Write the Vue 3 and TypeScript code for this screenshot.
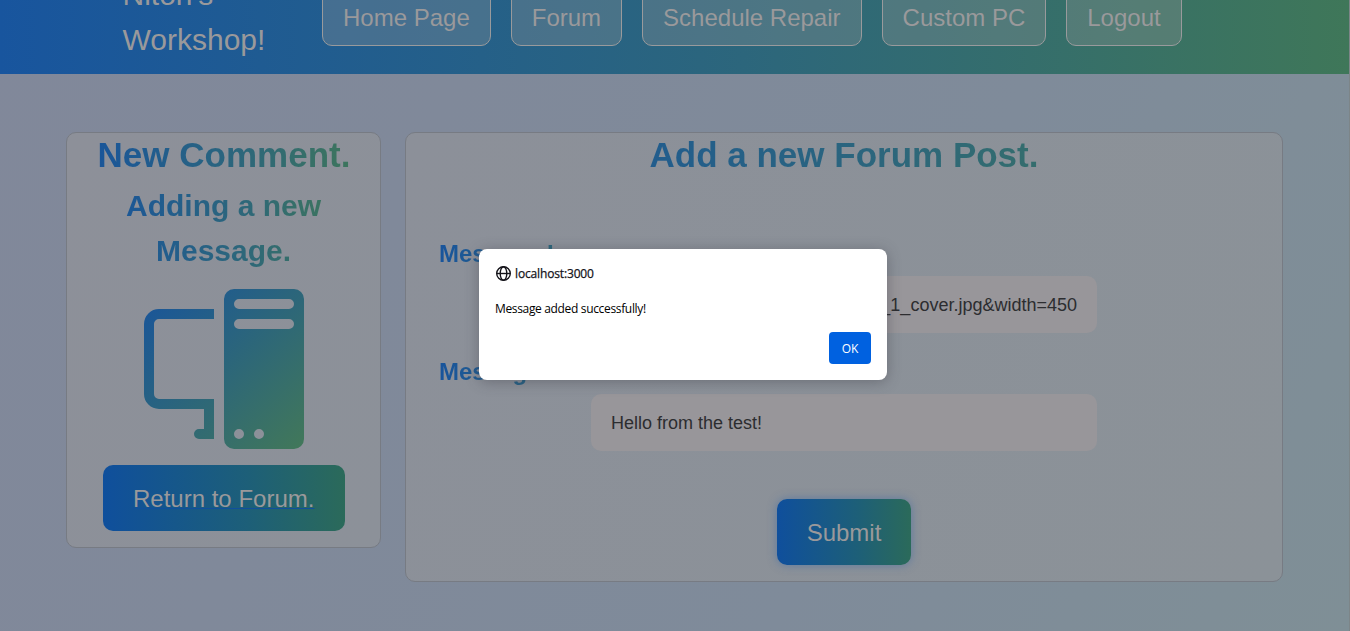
<script setup lang="ts">
const links: string[] = ['Home Page', 'Forum', 'Schedule Repair', 'Custom PC', 'Logout']
const fields: { label: string; value: string; end: boolean }[] = [
  { label: 'Message Image:', value: '_1_cover.jpg&width=450', end: true },
  { label: 'Message:', value: 'Hello from the test!', end: false },
]
</script>

<template>
  <div class="page">
    <header class="bar">
      <div class="brand">Niton's<br />Workshop!</div>
      <nav class="links">
        <a v-for="l in links" :key="l" class="link">{{ l }}</a>
      </nav>
    </header>
    <main class="main">
      <section class="card side">
        <h1 class="title grad">New Comment.</h1>
        <h2 class="sub grad">Adding a new Message.</h2>
        <svg class="pc" viewBox="0 0 16 16">
          <defs>
            <linearGradient id="pcfill" x1="0" y1="0" x2="1" y2="1">
              <stop offset="0" stop-color="#18549c" />
              <stop offset="0.5" stop-color="#2c667a" />
              <stop offset="1" stop-color="#427859" />
            </linearGradient>
          </defs>
          <path fill="url(#pcfill)" d="M8 1a1 1 0 0 1 1-1h6a1 1 0 0 1 1 1v14a1 1 0 0 1-1 1H9a1 1 0 0 1-1-1zm1 13.5a.5.5 0 1 0 1 0 .5.5 0 0 0-1 0m2 0a.5.5 0 1 0 1 0 .5.5 0 0 0-1 0M9.5 1a.5.5 0 0 0 0 1h5a.5.5 0 0 0 0-1zM9 3.5a.5.5 0 0 0 .5.5h5a.5.5 0 0 0 0-1h-5a.5.5 0 0 0-.5.5M1.5 2A1.5 1.5 0 0 0 0 3.5v7A1.5 1.5 0 0 0 1.5 12H6v2h-.5a.5.5 0 0 0 0 1H7v-4H1.5a.5.5 0 0 1-.5-.5v-7a.5.5 0 0 1 .5-.5H7V2z" />
        </svg>
        <a class="btn back"><span>Return to Forum.</span></a>
      </section>
      <section class="card form">
        <h1 class="title grad post">Add a new Forum Post.</h1>
        <div v-for="f in fields" :key="f.label" class="field">
          <label class="label grad">{{ f.label }}</label>
          <div class="input" :class="{ end: f.end }">{{ f.value }}</div>
        </div>
        <button class="btn submit">Submit</button>
      </section>
    </main>
    <div class="dialog">
      <div class="origin">
        <svg class="globe" viewBox="0 0 16 16" fill="none" stroke="#15141a" stroke-width="1.4">
          <circle cx="7.5" cy="7.5" r="6.8" />
          <ellipse cx="7.5" cy="7.5" rx="3.3" ry="6.8" />
          <path d="M.7 7.5h13.6" />
        </svg>
        <span>localhost:3000</span>
      </div>
      <div class="msg">Message added successfully!</div>
      <button class="ok">OK</button>
    </div>
    <div class="edge"></div>
  </div>
</template>

<style>
body { margin: 0; overflow: hidden; }
</style>

<style scoped>
.page {
  position: relative;
  width: 1350px;
  height: 631px;
  overflow: hidden;
  box-sizing: border-box;
  background: linear-gradient(115deg, #81889a 0%, #80899a 30%, #7f8b9a 65%, #7f8f96 100%);
  font-family: "Liberation Sans", Arial, sans-serif;
}
.bar {
  height: 74px;
  display: flex;
  align-items: flex-end;
  box-sizing: border-box;
  padding-left: 122.5px;
  background: linear-gradient(90deg, #18559e, #2c667c 55%, #3f7759);
}
.brand {
  width: 199.5px;
  font-size: 30px;
  line-height: 45px;
  color: #9a999b;
  padding-bottom: 12px;
}
.links { display: flex; gap: 20px; padding-bottom: 28px; }
.link {
  box-sizing: border-box;
  height: 66px;
  padding: 19px 20px 0;
  border: 1px solid #999a9c;
  border-radius: 10px;
  background: rgba(153, 153, 153, 0.3);
  color: #9a999b;
  font-size: 24px;
  line-height: 36px;
  white-space: nowrap;
}
.main { display: flex; align-items: flex-start; gap: 24px; padding: 58px 0 0 66px; }
.card {
  box-sizing: border-box;
  border: 1px solid #777b83;
  border-radius: 10px;
  background: linear-gradient(115deg, #8d9099, #8c9199);
  display: flex;
  flex-direction: column;
  align-items: center;
}
.side { width: 315px; height: 416px; }
.form { width: 878px; height: 450px; background: linear-gradient(115deg, #8c9099, #8b9298); }
.grad {
  margin: 0;
  color: transparent;
  background: linear-gradient(90deg, #18549c, #2c667c 55%, #3f7759);
  -webkit-background-clip: text;
  background-clip: text;
  font-weight: 700;
}
.title { width: 281px; text-align: center; font-size: 35px; line-height: 44px; white-space: nowrap; text-indent: 1px; }
.post { width: 810px; margin-bottom: 59px; text-indent: 0; }
.sub { width: 249px; padding: 6px 0 0; text-align: center; font-size: 30px; line-height: 45px; }
.pc { width: 160px; height: 160px; margin-top: 16px; }
.btn {
  box-sizing: border-box;
  height: 66px;
  border: 0;
  border-radius: 10px;
  padding: 1px 30px 0;
  background: linear-gradient(90deg, #0f4f9c, #1d5f78 60%, #2b6a5a);
  color: #9a999b;
  font: 24px/66px "Liberation Sans", Arial, sans-serif;
  white-space: nowrap;
}
.back { margin-top: 16px; width: 242px; padding-left: 30.5px; }
.back span { text-decoration: underline; text-decoration-color: #10509c; text-decoration-thickness: 1px; }
.field { width: 810px; height: 118px; display: flex; flex-direction: column; align-items: center; }
.label {
  align-self: flex-start;
  width: 202px;
  font-size: 24px;
  line-height: 36px;
  height: 40px;
}
.input {
  box-sizing: border-box;
  width: 506px;
  height: 57px;
  padding: 1px 20px 0;
  border-radius: 10px;
  background: #98969a;
  color: #2c2d30;
  font-size: 18px;
  line-height: 57px;
}
.end { text-align: right; }
.submit { margin-top: 27px; box-shadow: 0 0 10px rgba(60, 105, 165, 0.6); }
.dialog {
  position: absolute;
  left: 479px;
  top: 249px;
  width: 408px;
  height: 131px;
  box-sizing: border-box;
  padding: 16px;
  border-radius: 8px;
  background: #fff;
  box-shadow: 0 2px 14px rgba(58, 57, 68, 0.4);
  font-family: "Open Sans", "Noto Sans", sans-serif;
  font-size: 12px;
  color: #15141a;
  display: flex;
  flex-direction: column;
}
.origin { display: flex; align-items: center; gap: 3px; height: 17px; font-weight: 500; }
.globe { width: 16px; height: 16px; margin-left: 1px; }
.origin span { white-space: nowrap; letter-spacing: -0.15px; -webkit-text-stroke: 0.25px #15141a; }
.msg { margin-top: 18px; line-height: 17px; color: #000; white-space: nowrap; letter-spacing: -0.34px; }
.ok {
  margin-top: 15px;
  align-self: flex-end;
  width: 42px;
  height: 32px;
  padding: 1px 0 0;
  border: 0;
  border-radius: 4px;
  background: #0061e0;
  color: #fff;
  font: 500 12px/32px "Open Sans", "Noto Sans", sans-serif;
  letter-spacing: -0.2px;
}
.edge { position: absolute; right: 0; top: 0; width: 1px; height: 631px; background: #7d8588; }
</style>
